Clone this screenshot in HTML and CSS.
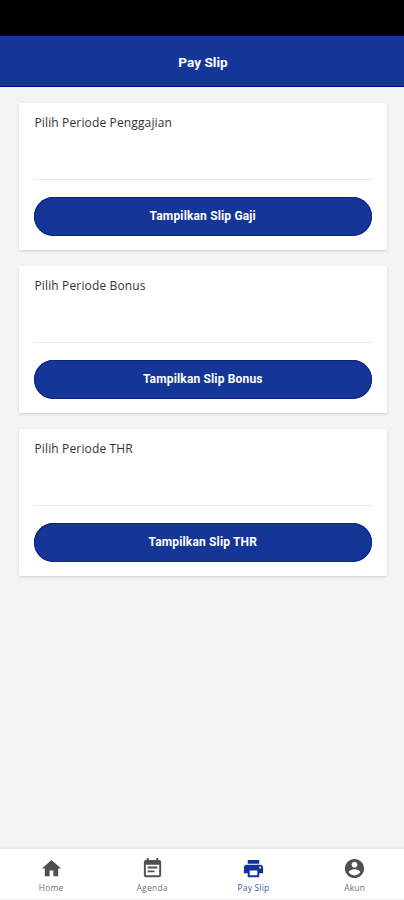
FILE: index.html
```html
<!DOCTYPE html>
<html lang="id">
<head>
<meta charset="utf-8">
<title>Pay Slip</title>
<link rel="stylesheet" href="styles.css">
</head>
<body>
<div class="status-bar"></div>
<header class="app-bar"><h1>Pay Slip</h1></header>
<main class="content">
  <section class="card">
    <label class="field">Pilih Periode Penggajian</label>
    <button class="submit">Tampilkan Slip Gaji</button>
  </section>
  <section class="card">
    <label class="field">Pilih Periode Bonus</label>
    <button class="submit">Tampilkan Slip Bonus</button>
  </section>
  <section class="card">
    <label class="field">Pilih Periode THR</label>
    <button class="submit">Tampilkan Slip THR</button>
  </section>
</main>
<nav class="tabs">
  <a class="tab">
    <svg viewBox="0 0 24 24"><path d="M10 20v-6h4v6h5v-8h3L12 3 2 12h3v8z"/></svg>
    <span>Home</span>
  </a>
  <a class="tab">
    <svg viewBox="0 0 24 24"><path d="M17 10H7v2h10v-2zm2-7h-1V1h-2v2H8V1H6v2H5c-1.110 0-1.990.9-1.990 2L3 19c0 1.100.89 2 2 2h14c1.100 0 2-.9 2-2V5c0-1.100-.9-2-2-2zm0 16H5V8h14v11zm-5-5H7v2h7v-2z"/></svg>
    <span>Agenda</span>
  </a>
  <a class="tab active">
    <svg viewBox="0 0 24 24"><path d="M19 8H5c-1.660 0-3 1.340-3 3v6h4v4h12v-4h4v-6c0-1.660-1.340-3-3-3zm-3 11H8v-5h8v5zm3-7c-.55 0-1-.45-1-1s.45-1 1-1 1 .45 1 1-.45 1-1 1zm-1-9H6v4h12V3z"/></svg>
    <span>Pay Slip</span>
  </a>
  <a class="tab">
    <svg viewBox="0 0 24 24"><path d="M12 2C6.480 2 2 6.480 2 12s4.480 10 10 10 10-4.480 10-10S17.520 2 12 2zm0 3c1.660 0 3 1.340 3 3s-1.340 3-3 3-3-1.340-3-3 1.340-3 3-3zm0 14.200c-2.500 0-4.710-1.280-6-3.220.03-1.990 4-3.080 6-3.080 1.990 0 5.970 1.090 6 3.080-1.290 1.940-3.500 3.220-6 3.220z"/></svg>
    <span>Akun</span>
  </a>
</nav>
</body>
</html>
```
FILE: styles.css
```css
* { box-sizing: border-box; }
body {
  margin: 0;
  height: 900px;
  display: flex;
  flex-direction: column;
  background: #f4f4f4;
  font-family: "Open Sans", sans-serif;
  overflow: hidden;
}
.status-bar { height: 35.5px; background: #000; }
.app-bar {
  height: 51px;
  display: flex;
  align-items: center;
  justify-content: center;
  background: #153696;
  border-bottom: 1px solid #00067f;
}
.app-bar h1 {
  margin: 0;
  padding: 3px 0 0 2px;
  color: #fff;
  font: 700 13.6px/20px Roboto, sans-serif;
}
.content {
  flex: 1;
  display: flex;
  flex-direction: column;
  gap: 15.5px;
  padding: 16px 17px 0 19px;
}
.card {
  height: 147.5px;
  padding: 10px 15.5px 0 15px;
  background: #fff;
  border-radius: 1px;
  box-shadow: 0 1px 3px rgba(0, 0, 0, 0.16);
}
.field {
  display: block;
  height: 67.5px;
  padding-left: 0.5px;
  border-bottom: 1px solid #ebebeb;
  color: #333;
  font-size: 12px;
  line-height: 20px;
  letter-spacing: 0.14px;
}
.submit {
  display: block;
  width: 100%;
  height: 39px;
  margin-top: 17px;
  padding: 0 0 1px;
  border: 0;
  border-radius: 20px;
  background: #153696;
  box-shadow: inset 0 0 0 1px #0b228a;
  color: #fff;
  font: 700 12px/37px Roboto, sans-serif;
  letter-spacing: 0.16px;
}
.tabs {
  height: 51px;
  display: flex;
  padding-left: 0.5px;
  background: #fff;
  border-bottom: 1px solid #eee;
  box-shadow: 0 -1px 2px rgba(0, 0, 0, 0.08);
}
.tab {
  flex: 0 0 101.2px;
  display: flex;
  flex-direction: column;
  align-items: center;
  padding-top: 8px;
  color: #505050;
  font-size: 8.4px;
  line-height: 12px;
}
.tab svg { width: 23px; height: 23px; fill: currentColor; }
.tab span { margin-top: 2px; color: #707070; letter-spacing: 0.25px; }
.active { color: #12309a; }
.tab.active span { color: #3a53a4; }
```
